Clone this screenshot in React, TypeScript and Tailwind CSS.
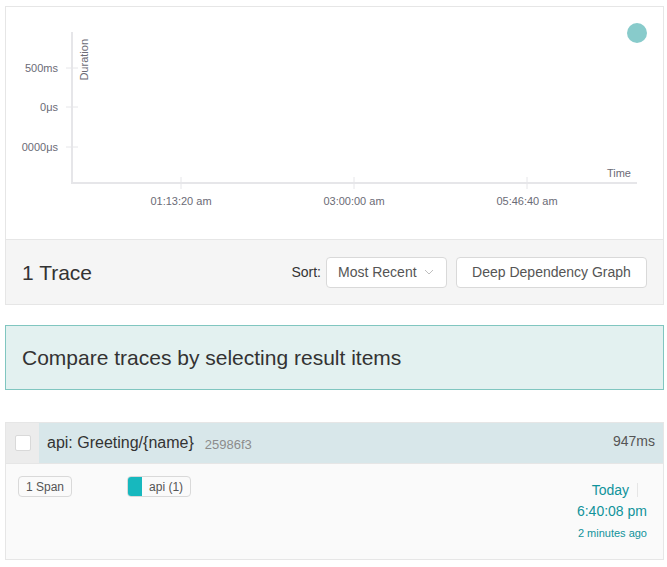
const font = { fontFamily: '"Liberation Sans", Arial, sans-serif' };

function ScatterPlot() {
  // coordinates relative to the panel's inner box (page x - 6, page y - 7)
  const ox = 6;
  const oy = 7;
  const X = (x: number) => x - ox;
  const Y = (y: number) => y - oy;
  const axis = "#e6e6e9";
  const label = "#6b6b76";
  return (
    <svg width={657} height={232} className="block">
      <line x1={X(72)} y1={Y(32)} x2={X(72)} y2={Y(184)} stroke={axis} strokeWidth={2} />
      <line x1={X(71)} y1={Y(183)} x2={X(637)} y2={Y(183)} stroke={axis} strokeWidth={2} />
      {[
        { y: 68, t: "500ms" },
        { y: 107, t: "0μs" },
        { y: 147, t: "0000μs" },
      ].map((k) => (
        <g key={k.t}>
          <line x1={X(66)} y1={Y(k.y)} x2={X(78)} y2={Y(k.y)} stroke={axis} strokeWidth={1} />
          <text x={X(58)} y={Y(k.y) + 4} textAnchor="end" fontSize={11} fill={label} style={font}>
            {k.t}
          </text>
        </g>
      ))}
      {[
        { x: 181, t: "01:13:20 am" },
        { x: 354, t: "03:00:00 am" },
        { x: 527, t: "05:46:40 am" },
      ].map((k) => (
        <g key={k.t}>
          <line x1={X(k.x)} y1={Y(177)} x2={X(k.x)} y2={Y(189)} stroke={axis} strokeWidth={1} />
          <text x={X(k.x)} y={Y(205)} textAnchor="middle" fontSize={11} fill={label} style={font}>
            {k.t}
          </text>
        </g>
      ))}
      <text x={X(631)} y={Y(177)} textAnchor="end" fontSize={11} fill={label} style={font}>
        Time
      </text>
      <text
        x={0}
        y={0}
        transform={`translate(${X(88)} ${Y(39)}) rotate(-90)`}
        textAnchor="end"
        fontSize={11}
        fill={label}
        style={font}
      >
        Duration
      </text>
      <circle cx={X(637)} cy={Y(33)} r={10} fill="#88cbcb" />
    </svg>
  );
}

function ResultsHeader() {
  return (
    <div className="flex items-center justify-between bg-[#f5f5f5] border-t border-[#e6e6e6] h-[65px] pl-4 pr-[16px]">
      <h2 className="text-[21px] text-[#333] mt-[1px]">1 Trace</h2>
      <div className="flex items-center">
        <span className="text-[14px] text-[#333] mr-[5px]">Sort:</span>
        <button className="flex items-center justify-between w-[121px] h-[31px] bg-white border border-[#d9d9d9] rounded-[4px] pl-[11px] pr-[12px] text-[14px] text-[#555]">
          Most Recent
          <svg width="10" height="10" viewBox="0 0 10 10" className="ml-1">
            <path d="M1 3l4 4 4-4" fill="none" stroke="#bfbfbf" strokeWidth="1" />
          </svg>
        </button>
        <button className="ml-[9px] w-[191px] h-[31px] bg-white border border-[#d9d9d9] rounded-[4px] text-[14px] text-[#555]">
          Deep Dependency Graph
        </button>
      </div>
    </div>
  );
}

function ResultItem() {
  return (
    <div className="border border-[#e6e6e6] bg-[#fafafa]">
      <div className="flex items-stretch bg-[#d8e7ea] h-[41px] border-b border-[#e6e6e6]">
        <div className="w-[33px] bg-[#ececec] flex items-center justify-center">
          <span className="block w-4 h-4 bg-white border border-[#d9d9d9] rounded-[2px]" />
        </div>
        <div className="flex-1 flex items-center pl-[8px] pr-[8px]">
          <span className="text-[16px] text-[#333]">api: Greeting/{"{name}"}</span>
          <span className="text-[13px] text-[#8c8c8c] ml-[11px] mt-[3px]">25986f3</span>
          <span className="ml-auto text-[14px] text-[#555] mb-[4px]">947ms</span>
        </div>
      </div>
      <div className="flex items-start pt-[12px] pl-[12px] pr-[16px] pb-[19px]">
        <span className="inline-flex items-center h-[21px] px-[7px] bg-[#fafafa] border border-[#d9d9d9] rounded-[4px] text-[12px] text-[#555]">
          1 Span
        </span>
        <span className="ml-[55px] inline-flex items-stretch h-[21px] bg-[#fafafa] border border-[#d9d9d9] rounded-[4px] overflow-hidden text-[12px] text-[#555]">
          <span className="w-[14px] bg-[#17b8be]" />
          <span className="flex items-center px-[7px]">api (1)</span>
        </span>
        <div className="ml-auto flex flex-col items-end text-[#11939a]">
          <div className="flex items-center mt-[4px]">
            <span className="text-[14px] leading-[20px]">Today</span>
            <span className="ml-[8px] mr-[9px] w-px h-[14px] bg-[#e6e6e6]" />
          </div>
          <span className="text-[14px] leading-[20px] mt-[1px]">6:40:08 pm</span>
          <span className="text-[11px] leading-[14px] mt-[5px]">2 minutes ago</span>
        </div>
      </div>
    </div>
  );
}

export default function App() {
  return (
    <div className="bg-white min-h-[567px] pt-[6px] pl-[5px]" style={font}>
      <div className="w-[659px]">
        <div className="border border-[#e6e6e6] bg-white">
          <ScatterPlot />
          <ResultsHeader />
        </div>
        <div className="mt-[20px] h-[65px] flex items-center bg-[#e3f1f0] border border-[#80c6c0] pl-4">
          <span className="text-[21px] text-[#333]">Compare traces by selecting result items</span>
        </div>
        <div className="mt-[32px]">
          <ResultItem />
        </div>
      </div>
    </div>
  );
}
